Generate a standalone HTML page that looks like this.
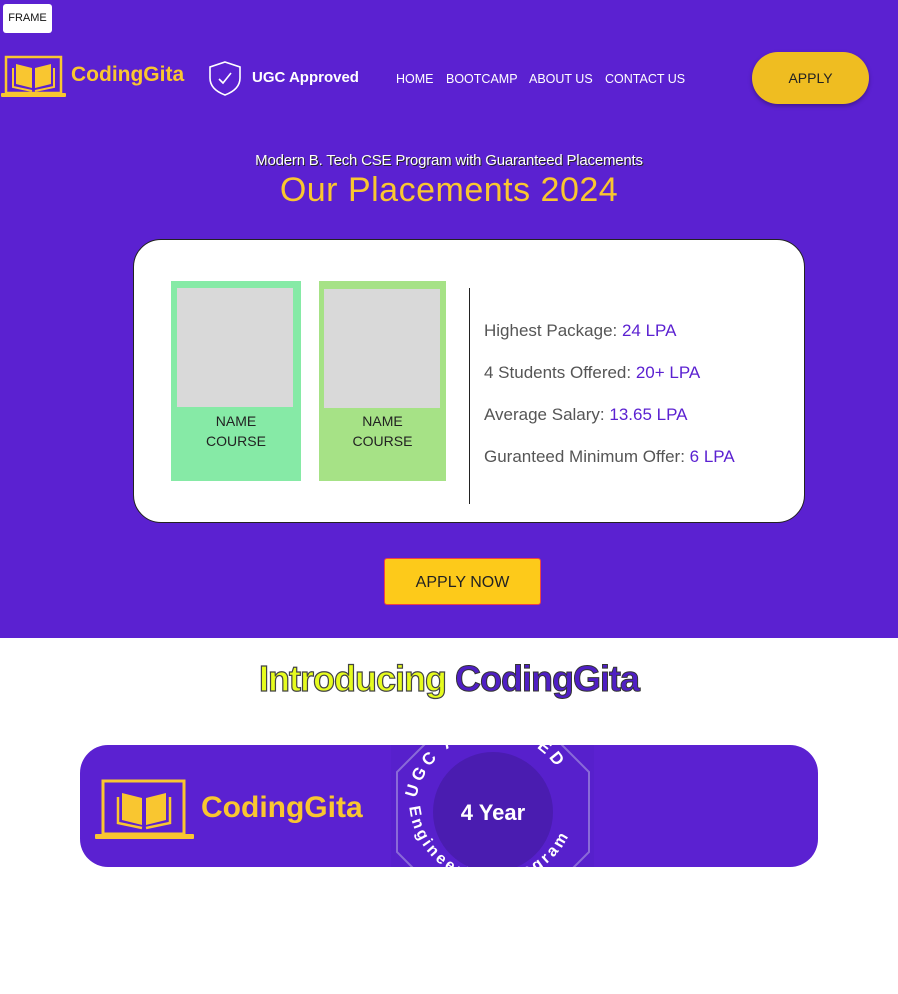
<!DOCTYPE html>
<html><head><meta charset="utf-8"><style>
*{margin:0;padding:0;box-sizing:border-box}
body{width:898px;height:994px;background:#fff;font-family:"Liberation Sans",sans-serif;position:relative;overflow:hidden}
.top{position:absolute;left:0;top:0;width:898px;height:638px;background:#5b21d1}
.abs{position:absolute}
.frame{left:3px;top:4px;width:49px;height:29px;background:#fff;border-radius:3px;font-size:11px;line-height:29px;text-align:center;color:#111}
.nav a{color:#fff;font-size:12.5px;text-decoration:none;position:absolute;top:72px}
.apply{left:752px;top:52px;width:117px;height:52px;background:#efbd21;border-radius:26px;text-align:center;line-height:52px;font-size:14px;color:#222;box-shadow:0 2px 4px rgba(0,0,0,.3)}
.card{left:133px;top:239px;width:672px;height:284px;background:#fff;border:1px solid #222;border-radius:28px}
.ph{background:#d9d9d9;position:absolute}
.lbl{position:absolute;text-align:center;font-size:14px;line-height:20px;color:#222}
.st{position:absolute;left:484px;font-size:17px;color:#555}
.st span{color:#5b21d1}
</style></head><body>
<div class="top"></div>
<div class="abs frame">FRAME</div>
<svg class="abs" style="left:0;top:54px" width="68" height="45" viewBox="0 0 68 45">
<rect x="6" y="3" width="55" height="36" fill="none" stroke="#f9c630" stroke-width="2.5"/>
<rect x="1" y="39" width="65" height="4" rx="1" fill="#f9c630"/>
<path d="M16 10 L32 14 L32 34 L16 30Z M35 14 L51 10 L51 30 L35 34Z" fill="#f9c630"/>
<path d="M13 14 V33 L32 37 M54 14 V33 L35 37" fill="none" stroke="#f9c630" stroke-width="2"/>
</svg>
<div class="abs" style="left:71px;top:63px;font-size:21px;font-weight:bold;color:#f9c630">CodingGita</div>
<svg class="abs" style="left:207px;top:60px" width="36" height="37" viewBox="0 0 36 37"><path d="M18 2 L33 7 V18 C33 27 26 32 18 35 C10 32 3 27 3 18 V7Z" fill="none" stroke="#fff" stroke-width="1.6"/><path d="M12 19 L16 23 L24 13" fill="none" stroke="#fff" stroke-width="1.6"/></svg>
<div class="abs" style="left:252px;top:69px;font-size:15px;font-weight:bold;color:#fff">UGC Approved</div>
<div class="nav"><a style="left:396px">HOME</a><a style="left:446px">BOOTCAMP</a><a style="left:529px">ABOUT US</a><a style="left:605px">CONTACT US</a></div>
<div class="abs apply">APPLY</div>
<div class="abs" style="left:0;width:898px;top:152px;text-align:center;font-size:15px;color:#fff;text-shadow:1px 1px 0 #222;letter-spacing:-0.2px">Modern B. Tech CSE Program with Guaranteed Placements</div>
<div class="abs" style="left:0;width:898px;top:171px;text-align:center;font-size:34px;color:#f9c630;letter-spacing:0.5px">Our Placements 2024</div>
<div class="abs card"></div>
<div class="abs" style="left:171px;top:281px;width:130px;height:200px;background:#86eaa6"></div>
<div class="ph" style="left:177px;top:288px;width:116px;height:119px"></div>
<div class="lbl" style="left:171px;top:411px;width:130px">NAME<br>COURSE</div>
<div class="abs" style="left:319px;top:281px;width:127px;height:200px;background:#a6e286"></div>
<div class="ph" style="left:324px;top:289px;width:116px;height:119px"></div>
<div class="lbl" style="left:319px;top:411px;width:127px">NAME<br>COURSE</div>
<div class="abs" style="left:469px;top:288px;width:1px;height:216px;background:#222"></div>
<div class="st" style="top:321px">Highest Package: <span>24 LPA</span></div>
<div class="st" style="top:363px">4 Students Offered: <span>20+ LPA</span></div>
<div class="st" style="top:405px">Average Salary: <span>13.65 LPA</span></div>
<div class="st" style="top:447px">Guranteed Minimum Offer: <span>6 LPA</span></div>
<div class="abs" style="left:384px;top:558px;width:157px;height:47px;background:#fdca1a;border:1px solid #e44;border-radius:3px;text-align:center;line-height:47px;font-size:16px;color:#222">APPLY NOW</div>
<div class="abs" style="left:0;width:898px;top:658px;text-align:center;font-size:36px;font-weight:bold;letter-spacing:-1px"><span style="color:#e6fc1e;-webkit-text-stroke:1.2px #444">Introducing</span> <span style="color:#4f1fc4;-webkit-text-stroke:1px #333">CodingGita</span></div>
<div class="abs" style="left:80px;top:745px;width:738px;height:122px;background:#5b21d1;border-radius:28px;overflow:hidden">
<svg class="abs" style="left:14px;top:34px" width="102" height="62" viewBox="0 0 102 62">
<rect x="9" y="2" width="81" height="53" fill="none" stroke="#f9c630" stroke-width="3"/>
<rect x="1" y="55" width="99" height="5" rx="1" fill="#f9c630"/>
<path d="M28 14 L48 19 L48 46 L28 41Z M52 19 L72 14 L72 41 L52 46Z" fill="#f9c630"/>
<path d="M24 18 V44 L48 49 M76 18 V44 L52 49" fill="none" stroke="#f9c630" stroke-width="2.5"/>
</svg>
<div class="abs" style="left:121px;top:46px;font-size:30px;font-weight:bold;color:#f9c630">CodingGita</div>
<div class="abs" style="left:311px;top:0;width:203px;height:122px;background:#5720cc"></div>
<svg class="abs" style="left:316px;top:-30px" width="194" height="194" viewBox="0 0 194 194">
<defs>
<path id="t" d="M20 110 A78 78 0 1 1 174 110"/>
<path id="b" d="M13 84 A84 84 0 0 0 181 84"/>
</defs>
<polygon points="57,1 137,1 193,57 193,137 137,193 57,193 1,137 1,57" fill="none" stroke="#8a6ad8" stroke-width="2"/>
<circle cx="97" cy="97" r="60" fill="#4a1cb0"/>
<text x="97" y="105" text-anchor="middle" font-family="Liberation Sans" font-weight="bold" font-size="22" fill="#fff">4 Year</text>
<text font-size="17" font-weight="bold" fill="#fff" letter-spacing="4"><textPath href="#t" startOffset="10%">UGC APPROVED</textPath></text>
<text font-size="16" font-weight="bold" fill="#fff" letter-spacing="3"><textPath href="#b" startOffset="3%">Engineering Program</textPath></text>
</svg>
</div>
</body></html>
